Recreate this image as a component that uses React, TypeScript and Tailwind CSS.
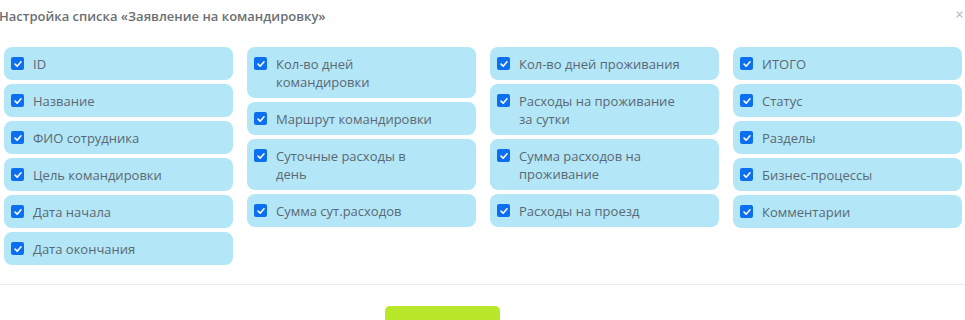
const columns: string[][] = [
  ["ID", "Название", "ФИО сотрудника", "Цель командировки", "Дата начала", "Дата окончания"],
  ["Кол-во дней командировки", "Маршрут командировки", "Суточные расходы в\nдень", "Сумма сут.расходов"],
  ["Кол-во дней проживания", "Расходы на проживание за сутки", "Сумма расходов на проживание", "Расходы на проезд"],
  ["ИТОГО", "Статус", "Разделы", "Бизнес-процессы", "Комментарии"],
];

function Item({ label }: { label: string }) {
  return (
    <label className="flex items-start gap-[9px] rounded-[8px] bg-[#b3e7f8] pl-[7px] pr-2 py-[7.5px] cursor-pointer">
      <span className="mt-[2.5px] flex h-[13px] w-[13px] shrink-0 items-center justify-center rounded-[2px] bg-[#0b6ff0]">
        <svg viewBox="0 0 12 12" className="h-[10px] w-[10px]">
          <path d="M2.5 6.2 L5 8.6 L9.6 3.4" fill="none" stroke="#fff" strokeWidth="1.9" strokeLinecap="round" strokeLinejoin="round" />
        </svg>
      </span>
      <span className="max-w-[168px] whitespace-pre-line text-[13px] leading-[18px] text-[#5b6873]">{label}</span>
    </label>
  );
}

export default function App() {
  return (
    <div className="h-[320px] w-[965px] overflow-hidden bg-white" style={{ fontFamily: '"Open Sans", "Noto Sans", sans-serif' }}>
      <div className="flex items-start justify-between pt-[6px] pr-[2px]">
        <h2 className="ml-[-1px] text-[13px] font-semibold leading-[20px] text-[#6b6f73]">
          Настройка списка «Заявление на командировку»
        </h2>
        <svg viewBox="0 0 8 8" className="mt-[5px] h-[7px] w-[7px]">
          <path d="M1 1 L7 7 M7 1 L1 7" stroke="#b8b8b8" strokeWidth="1.4" strokeLinecap="round" />
        </svg>
      </div>

      <div className="mt-[21px] grid grid-cols-4 gap-x-[14px] pl-[4px] pr-[3px]">
        {columns.map((col, i) => (
          <div key={i} className="flex flex-col gap-[4px]">
            {col.map((label) => (
              <Item key={label} label={label} />
            ))}
          </div>
        ))}
      </div>

      <div className="mt-[19px] border-t border-[#ececec]" />

      <div className="flex justify-center pt-[21px] pr-[80px]">
        <button className="h-[36px] w-[115px] rounded-[5px] bg-[#b9e82b]" />
      </div>
    </div>
  );
}
